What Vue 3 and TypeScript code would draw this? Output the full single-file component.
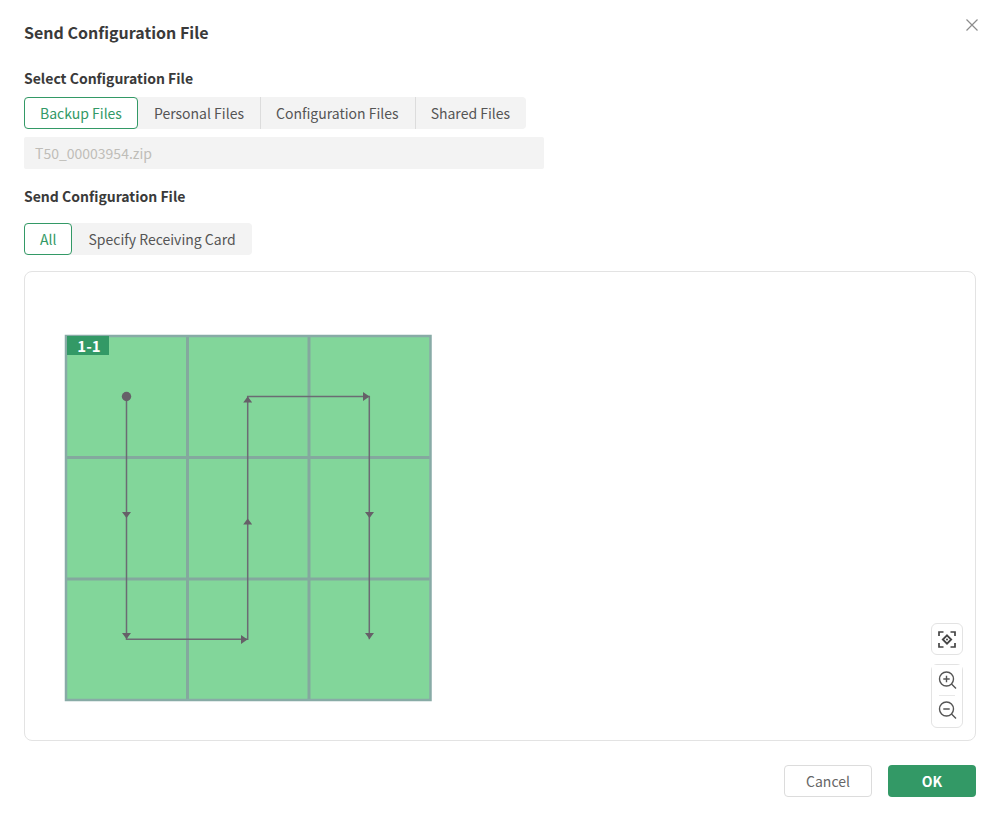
<script setup lang="ts">
const fileTabs: string[] = ['Backup Files', 'Personal Files', 'Configuration Files', 'Shared Files']
const cardTabs: string[] = ['All', 'Specify Receiving Card']
const inner: number[] = [122.5, 244]
</script>

<template>
  <div class="dialog">
    <svg class="close" width="14" height="14" viewBox="0 0 14 14">
      <path d="M1.5 1.5 12.5 12.5M12.5 1.5 1.5 12.5" stroke="#8c8c8c" stroke-width="1.2" fill="none" />
    </svg>
    <h1 class="title">Send Configuration File</h1>
    <h2 class="label first">Select Configuration File</h2>
    <div class="tabs">
      <button v-for="(t, i) in fileTabs" :key="t" class="tab file" :class="{ active: i === 0 }">{{ t }}</button>
    </div>
    <div class="file-field">T50_00003954.zip</div>
    <h2 class="label second">Send Configuration File</h2>
    <div class="tabs card-tabs">
      <button v-for="(t, i) in cardTabs" :key="t" class="tab" :class="{ active: i === 0 }">{{ t }}</button>
    </div>
    <div class="canvas">
      <div class="screen">
        <svg width="370" height="370" viewBox="-2 -2 370 370">
          <rect x="0" y="0" width="366" height="366" fill="#82d69a" />
          <g stroke="#84a89e" stroke-width="3" fill="none">
            <path v-for="g in inner" :key="'v' + g" :d="`M${g} 0V366`" />
            <path v-for="g in inner" :key="'h' + g" :d="`M0 ${g}H366`" />
          </g>
          <rect x="1" y="1" width="364.500" height="364" fill="none" stroke="#88aba6" stroke-width="2.500" />
          <g stroke="#6b6b73" stroke-width="1.500" fill="none">
            <path d="M61.500 61.500V304.300H182.700V61.500H304.300V304.300" />
          </g>
          <g fill="#666068">
            <circle cx="61.500" cy="61.500" r="4.700" />
            <path d="M57 177h9l-4.500 6zM57 298h9l-4.500 6zM300 177h9l-4.500 6zM300 298h9l-4.500 6z" />
            <path d="M178.200 67.500h9l-4.500-6zM178.200 189.500h9l-4.500-6z" />
            <path d="M298 57v9l6.500-4.500zM176 300v9l6.500-4.500z" />
          </g>
        </svg>
        <span class="badge">1-1</span>
      </div>
      <div class="tools">
        <button class="tool single" aria-label="Center">
          <svg width="18" height="18" viewBox="0 -0.500 18 18" fill="none" stroke="#444" stroke-width="1.700">
            <path d="M1 5.500V1.500H5.500M12.500 1.500H17V5.500M17 12.500V16.500H12.500M5.500 16.500H1V12.500" />
            <path d="M9 4.800 13.200 9 9 13.200 4.800 9Z" stroke-width="1.800" />
            <circle cx="9" cy="9" r="1" fill="#444" stroke="none" />
          </svg>
        </button>
        <div class="tool-group">
          <button class="tool" aria-label="Zoom in">
            <svg width="20" height="20" viewBox="-0.500 0 20 20" fill="none" stroke="#555" stroke-width="1.400">
              <circle cx="9" cy="9" r="7" />
              <path d="M14 14 18.500 18.500M9 5.800V12.200M5.800 9H12.200" />
            </svg>
          </button>
          <span class="divider"></span>
          <button class="tool lower" aria-label="Zoom out">
            <svg width="20" height="20" viewBox="-0.500 0 20 20" fill="none" stroke="#555" stroke-width="1.400">
              <circle cx="9" cy="9" r="7" />
              <path d="M14 14 18.500 18.500M5.800 9H12.200" />
            </svg>
          </button>
        </div>
      </div>
    </div>
    <div class="footer">
      <button class="btn cancel">Cancel</button>
      <button class="btn ok">OK</button>
    </div>
  </div>
</template>

<style scoped>
.dialog {
  position: relative;
  box-sizing: border-box;
  width: 998px;
  height: 814px;
  padding: 20px 22px 0 24px;
  background: #fff;
  font-family: "Noto Sans CJK SC", "Noto Sans", sans-serif;
  color: #3a3a3a;
}
.close {
  position: absolute;
  top: 18px;
  right: 19px;
}
.title {
  margin: 0;
  font-size: 16px;
  line-height: 24px;
  font-weight: 700;
}
.label {
  margin: 0;
  font-size: 14px;
  line-height: 20px;
  font-weight: 700;
}
.label.first {
  margin-top: 24px;
}
.label.second {
  margin-top: 17px;
}
.tabs {
  display: flex;
  width: max-content;
  margin-top: 9px;
  background: #f3f3f3;
  border-radius: 4px;
}
.card-tabs {
  margin-top: 17px;
}
.tab {
  box-sizing: border-box;
  height: 32px;
  padding: 0 16px;
  border: 0;
  background: transparent;
  font: inherit;
  font-size: 14px;
  color: #555;
  border-radius: 4px;
}
.tab.file + .tab.file {
  padding-left: 15px;
  border-left: 1px solid #dcdcdc;
  border-radius: 0;
}
.tab.file.active + .tab.file {
  padding-left: 16px;
  border-left: 0;
}
.tab.active {
  border: 1px solid #339966;
  background: #fff;
  color: #339966;
  padding: 0 15px;
}
.file-field {
  box-sizing: border-box;
  width: 520px;
  height: 32px;
  margin-top: 8px;
  padding: 0 11px;
  background: #f3f3f3;
  border-radius: 2px;
  font-size: 14px;
  line-height: 32px;
  color: #bfbdb8;
}
.canvas {
  position: relative;
  box-sizing: border-box;
  width: 952px;
  height: 470px;
  margin-top: 16px;
  padding: 61px 0 0 38px;
  border: 1px solid #e3e3e3;
  border-radius: 8px;
}
.screen {
  position: relative;
  width: 370px;
  height: 370px;
}
.screen svg {
  display: block;
}
.badge {
  position: absolute;
  top: 3px;
  left: 4px;
  box-sizing: border-box;
  width: 42px;
  height: 19px;
  padding-left: 2px;
  background: #339966;
  color: #fff;
  font-size: 15px;
  font-weight: 700;
  line-height: 19px;
  text-align: center;
}
.tools {
  position: absolute;
  right: 12px;
  bottom: 12px;
  display: flex;
  flex-direction: column;
  gap: 9px;
  width: 32px;
}
.tool {
  display: flex;
  align-items: center;
  justify-content: center;
  box-sizing: border-box;
  width: 30px;
  height: 30px;
  padding: 0;
  border: 0;
  background: #fff;
}
.tool.single {
  width: 32px;
  height: 32px;
  border: 1px solid #e3e3e3;
  border-radius: 6px;
}
.tool-group {
  box-sizing: border-box;
  display: flex;
  flex-direction: column;
  align-items: center;
  height: 64px;
  border: 1px solid #e3e3e3;
  border-radius: 6px;
}
.divider {
  width: 16px;
  height: 1px;
  background: #e8e8e8;
}
.tool.lower {
  height: 27px;
}
.footer {
  display: flex;
  justify-content: flex-end;
  gap: 16px;
  margin-top: 24px;
}
.btn {
  box-sizing: border-box;
  width: 88px;
  height: 32px;
  border-radius: 4px;
  font: inherit;
  font-size: 14px;
}
.cancel {
  border: 1px solid #dcdcdc;
  background: #fff;
  color: #666;
}
.ok {
  border: 0;
  background: #339966;
  color: #fff;
  font-weight: 700;
}
</style>
